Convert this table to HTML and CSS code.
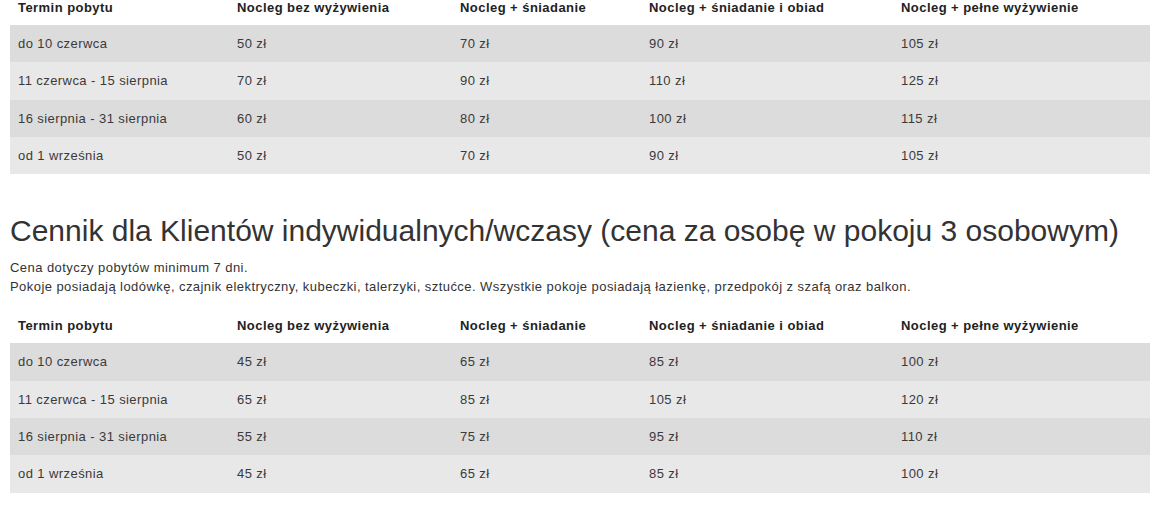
FILE: index.html
```html
<!DOCTYPE html>
<html lang="pl">
<head>
<meta charset="utf-8">
<link rel="stylesheet" href="styles.css">
</head>
<body>
<div class="page">
  <table class="prices">
    <thead>
      <tr><th class="c1">Termin pobytu</th><th class="c2">Nocleg bez wyżywienia</th><th class="c3">Nocleg + śniadanie</th><th class="c4">Nocleg + śniadanie i obiad</th><th class="c5">Nocleg + pełne wyżywienie</th></tr>
    </thead>
    <tbody>
      <tr><td>do 10 czerwca</td><td>50 zł</td><td>70 zł</td><td>90 zł</td><td>105 zł</td></tr>
      <tr><td>11 czerwca - 15 sierpnia</td><td>70 zł</td><td>90 zł</td><td>110 zł</td><td>125 zł</td></tr>
      <tr><td>16 sierpnia - 31 sierpnia</td><td>60 zł</td><td>80 zł</td><td>100 zł</td><td>115 zł</td></tr>
      <tr><td>od 1 września</td><td>50 zł</td><td>70 zł</td><td>90 zł</td><td>105 zł</td></tr>
    </tbody>
  </table>

  <h2 class="title">Cennik dla Klientów indywidualnych/wczasy (cena za osobę w pokoju 3 osobowym)</h2>
  <p class="note">Cena dotyczy pobytów minimum 7 dni.<br>Pokoje posiadają lodówkę, czajnik elektryczny, kubeczki, talerzyki, sztućce. Wszystkie pokoje posiadają łazienkę, przedpokój z szafą oraz balkon.</p>

  <table class="prices">
    <thead>
      <tr><th class="c1">Termin pobytu</th><th class="c2">Nocleg bez wyżywienia</th><th class="c3">Nocleg + śniadanie</th><th class="c4">Nocleg + śniadanie i obiad</th><th class="c5">Nocleg + pełne wyżywienie</th></tr>
    </thead>
    <tbody>
      <tr><td>do 10 czerwca</td><td>45 zł</td><td>65 zł</td><td>85 zł</td><td>100 zł</td></tr>
      <tr><td>11 czerwca - 15 sierpnia</td><td>65 zł</td><td>85 zł</td><td>105 zł</td><td>120 zł</td></tr>
      <tr><td>16 sierpnia - 31 sierpnia</td><td>55 zł</td><td>75 zł</td><td>95 zł</td><td>110 zł</td></tr>
      <tr><td>od 1 września</td><td>45 zł</td><td>65 zł</td><td>85 zł</td><td>100 zł</td></tr>
    </tbody>
  </table>
</div>
</body>
</html>
```
FILE: styles.css
```css
html, body {
  margin: 0;
  padding: 0;
  background: #ffffff;
}
body {
  font-family: "Liberation Sans", Arial, sans-serif;
  font-size: 13px;
  color: #333333;
}
.page {
  margin: -11px 6px 0 10px;
}
.prices {
  width: 1140px;
  border-collapse: collapse;
  table-layout: fixed;
}
.prices th,
.prices td {
  height: 37.33px;
  padding: 0 8px;
  text-align: left;
  vertical-align: middle;
  box-sizing: border-box;
  letter-spacing: 0.42px;
}
.prices th {
  height: 36px;
  font-weight: bold;
  color: #222222;
  letter-spacing: 0.45px;
}
.prices td {
  color: #3a3a3a;
}
.c1 { width: 219px; }
.c2 { width: 223px; }
.c3 { width: 189px; }
.c4 { width: 252px; }
.c5 { width: 257px; }
.prices tbody tr:nth-child(odd) { background: #dcdcdc; }
.prices tbody tr:nth-child(even) { background: #e9e8e9; }
.title {
  margin: 39px 0 0 0;
  font-size: 30px;
  font-weight: normal;
  line-height: 36px;
  color: #333333;
}
.note {
  margin: 9px 0 11px 0;
  line-height: 19px;
  color: #333333;
  letter-spacing: 0.44px;
}
```
